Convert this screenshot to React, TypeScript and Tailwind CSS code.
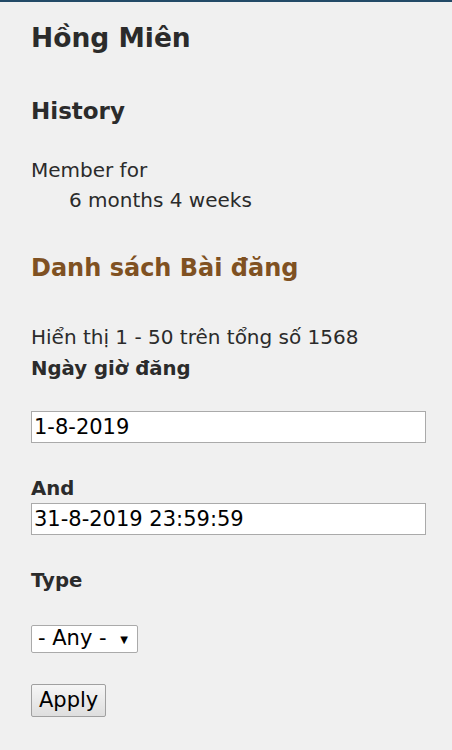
import React from "react";

export default function App() {
  return (
    <div
      className="min-h-[750px] bg-[#f0f0f0] border-t-2 border-[#234a67] text-[#2b2b2b]"
      style={{ fontFamily: '"DejaVu Sans", Verdana, sans-serif' }}
    >
      <div className="pl-[31px] pr-[26px]">
        <h1 className="pt-[18px] text-[26.5px] font-bold leading-[36px]">Hồng Miên</h1>

        <h2 className="mt-[39px] text-[23px] font-bold leading-[32px]">History</h2>
        <div className="mt-[28px] text-[20px] leading-[30px]">
          <div>Member for</div>
          <div className="pl-[38px]">6 months 4 weeks</div>
        </div>

        <h2 className="mt-[36px] text-[24px] font-bold leading-[34px]">
          <span className="text-[#7f5122]">Danh sách Bài đăng</span>
        </h2>

        <div className="mt-[36px] text-[20px] leading-[32px]">
          Hiển thị 1 - 50 trên tổng số 1568
        </div>

        <form onSubmit={(e) => e.preventDefault()}>
          <label className="mt-[2px] block text-[19.7px] font-bold leading-[28px]">Ngày giờ đăng</label>
          <input
            defaultValue="1-8-2019"
            className="mt-[28px] block w-full h-[32px] border border-[#aaa] bg-white px-[2px] text-[21px] text-black outline-none"
          />

          <label className="mt-[32px] block text-[19.7px] font-bold leading-[28px]">And</label>
          <input
            defaultValue="31-8-2019 23:59:59"
            className="block w-full h-[32px] border border-[#aaa] bg-white px-[2px] text-[21px] text-black outline-none"
          />

          <label className="mt-[32px] block text-[19.7px] font-bold leading-[28px]">Type</label>
          <div className="mt-[30px] flex h-[28px] w-[107px] items-center justify-between rounded-[2px] border border-[#aaa] bg-white pl-[6px] pr-[9px] text-[21px] text-black">
            <span>- Any -</span>
            <span className="text-[10px]">▼</span>
          </div>

          <button
            type="submit"
            className="mt-[31px] block h-[33px] rounded-[2px] border border-[#a0a0a0] bg-gradient-to-b from-[#f6f6f6] to-[#dedede] px-[7px] text-[21px] leading-none text-black"
          >
            Apply
          </button>
        </form>
      </div>
    </div>
  );
}
